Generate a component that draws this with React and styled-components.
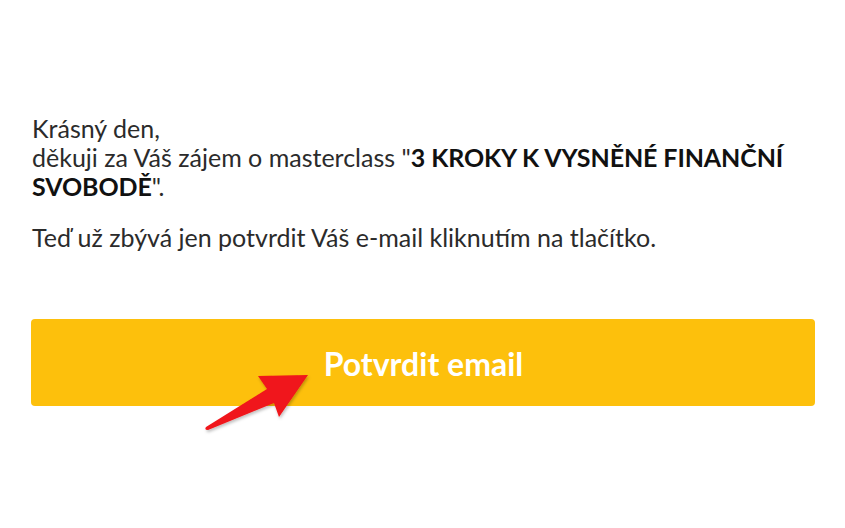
import styled, { createGlobalStyle } from "styled-components";

const GlobalStyle = createGlobalStyle`
  html, body {
    margin: 0;
    padding: 0;
    background: #ffffff;
  }
  body {
    font-family: Lato, "Open Sans", sans-serif;
  }
`;

const Page = styled.div`
  width: 845px;
  height: 528px;
  box-sizing: border-box;
  padding: 114px 30px 0 31px;
  overflow: hidden;
`;

const Text = styled.p`
  margin: 0 0 ${(p) => p.gap || 0}px 1px;
  font-size: 25px;
  line-height: 29px;
  color: #2b2b2b;
`;

const Strong = styled.strong`
  font-weight: 700;
  letter-spacing: -0.1px;
  color: #111111;
`;

const ButtonArea = styled.div`
  position: relative;
  margin-top: 67px;
`;

const ConfirmButton = styled.a`
  display: flex;
  align-items: center;
  justify-content: center;
  height: 87px;
  border-radius: 4px;
  background: #fdc00c;
  color: #ffffff;
  font-size: 32px;
  font-weight: 700;
  text-decoration: none;
  padding: 2px 0 0 1px;
  box-sizing: border-box;
`;

const Arrow = styled.svg`
  position: absolute;
  left: 170px;
  top: 56px;
  overflow: visible;
`;

export default function App() {
  return (
    <>
      <GlobalStyle />
      <Page>
        <Text gap={22}>
          Krásný den,
          <br />
          děkuji za Váš zájem o masterclass "
          <Strong>3 KROKY K VYSNĚNÉ FINANČNÍ SVOBODĚ</Strong>".
        </Text>
        <Text>Teď už zbývá jen potvrdit Váš e-mail kliknutím na tlačítko.</Text>
        <ButtonArea>
          <ConfirmButton href="#">Potvrdit email</ConfirmButton>
          <Arrow width="110" height="60" viewBox="0 0 110 60">
            <defs>
              <filter id="sh" x="-20%" y="-20%" width="140%" height="140%">
                <feDropShadow dx="1" dy="2" stdDeviation="1.5" floodColor="#000" floodOpacity="0.25" />
              </filter>
            </defs>
            {/* tapered red arrow, tip at upper right */}
            <path
              d="M5 52 L66 14 L57 1 L107 0 L78 42 L73 28 L7 55 Q3 55 5 52 Z"
              fill="#f0151a"
              filter="url(#sh)"
            />
          </Arrow>
        </ButtonArea>
      </Page>
    </>
  );
}
